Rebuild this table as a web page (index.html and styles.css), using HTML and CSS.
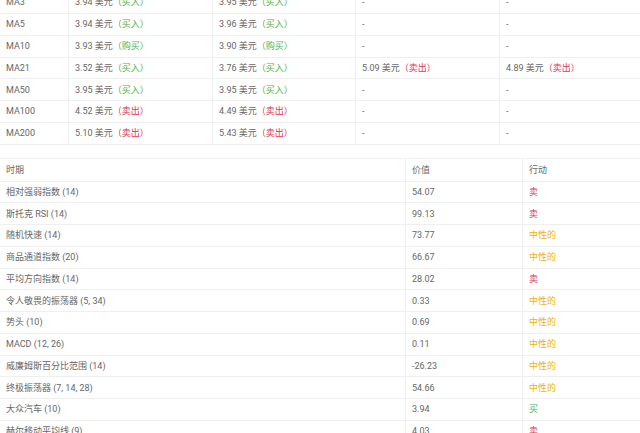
FILE: index.html
```html
<!DOCTYPE html>
<html lang="zh-CN">
<head>
<meta charset="utf-8">
<link rel="stylesheet" href="styles.css">
</head>
<body>
<table class="ma">
  <colgroup><col class="c1"><col class="c2"><col class="c3"><col class="c4"><col class="c5"></colgroup>
  <tr><td>MA3</td><td>3.94 美元<span class="buy">（买入）</span></td><td>3.95 美元<span class="buy">（买入）</span></td><td>-</td><td>-</td></tr>
  <tr><td>MA5</td><td>3.94 美元<span class="buy">（买入）</span></td><td>3.96 美元<span class="buy">（买入）</span></td><td>-</td><td>-</td></tr>
  <tr><td>MA10</td><td>3.93 美元<span class="buy">（购买）</span></td><td>3.90 美元<span class="buy">（购买）</span></td><td>-</td><td>-</td></tr>
  <tr><td>MA21</td><td>3.52 美元<span class="buy">（买入）</span></td><td>3.76 美元<span class="buy">（买入）</span></td><td>5.09 美元<span class="sell">（卖出）</span></td><td>4.89 美元<span class="sell">（卖出）</span></td></tr>
  <tr><td>MA50</td><td>3.95 美元<span class="buy">（买入）</span></td><td>3.95 美元<span class="buy">（买入）</span></td><td>-</td><td>-</td></tr>
  <tr><td>MA100</td><td>4.52 美元<span class="sell">（卖出）</span></td><td>4.49 美元<span class="sell">（卖出）</span></td><td>-</td><td>-</td></tr>
  <tr><td>MA200</td><td>5.10 美元<span class="sell">（卖出）</span></td><td>5.43 美元<span class="sell">（卖出）</span></td><td>-</td><td>-</td></tr>
</table>

<table class="osc">
  <colgroup><col class="d1"><col class="d2"><col class="d3"></colgroup>
  <tr class="head"><td>时期</td><td>价值</td><td>行动</td></tr>
  <tr><td>相对强弱指数 (14)</td><td>54.07</td><td class="sell">卖</td></tr>
  <tr><td>斯托克 RSI (14)</td><td>99.13</td><td class="sell">卖</td></tr>
  <tr><td>随机快速 (14)</td><td>73.77</td><td class="neutral">中性的</td></tr>
  <tr><td>商品通道指数 (20)</td><td>66.67</td><td class="neutral">中性的</td></tr>
  <tr><td>平均方向指数 (14)</td><td>28.02</td><td class="sell">卖</td></tr>
  <tr><td>令人敬畏的振荡器 (5, 34)</td><td>0.33</td><td class="neutral">中性的</td></tr>
  <tr><td>势头 (10)</td><td>0.69</td><td class="neutral">中性的</td></tr>
  <tr><td>MACD (12, 26)</td><td>0.11</td><td class="neutral">中性的</td></tr>
  <tr><td>威廉姆斯百分比范围 (14)</td><td>-26.23</td><td class="neutral">中性的</td></tr>
  <tr><td>终极振荡器 (7, 14, 28)</td><td>54.66</td><td class="neutral">中性的</td></tr>
  <tr><td>大众汽车 (10)</td><td>3.94</td><td class="buy">买</td></tr>
  <tr><td>赫尔移动平均线 (9)</td><td>4.03</td><td class="sell">卖</td></tr>
</table>
</body>
</html>
```

FILE: styles.css
```css
html, body {
  margin: 0;
  padding: 0;
  background: #fff;
  overflow: hidden;
}
body {
  font-family: Roboto, "Noto Sans CJK SC", sans-serif;
  font-size: 9px;
  color: #666;
}
table {
  border-collapse: collapse;
  table-layout: fixed;
  width: 641px;
  margin-left: -1px;
}
td {
  height: 21.75px;
  padding: 0 6px;
  box-sizing: border-box;
  border: 1px solid #efefef;
  white-space: nowrap;
  vertical-align: middle;
  line-height: 12px;
}
.ma {
  margin-top: -8.25px;
}
.ma tr:first-child td { border-top: none; }
.c1 { width: 69px; }
.c2 { width: 144px; }
.c3 { width: 143px; }
.c4 { width: 144px; }
.c5 { width: 141px; }
.osc {
  margin-top: 13.5px;
}
.d1 { width: 406px; }
.d2 { width: 117px; }
.d3 { width: 118px; }
.osc .head td { height: 22.5px; }
.buy { color: #52b24a; }
.sell { color: #dc3550; }
.neutral { color: #f0b400; }
```
